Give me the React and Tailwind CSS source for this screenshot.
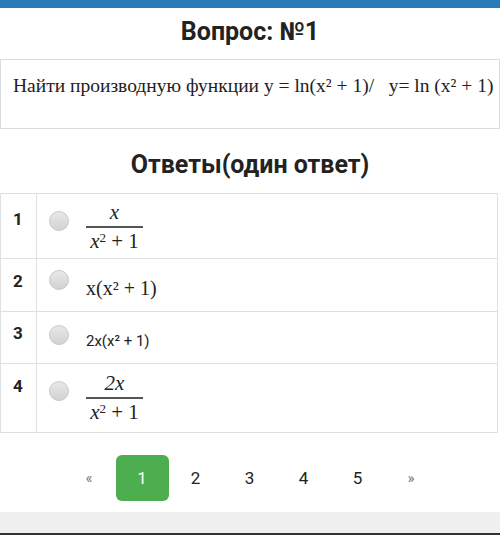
import React from 'react';

const sans = { fontFamily: "Roboto, 'Liberation Sans', sans-serif" };
const serif = { fontFamily: "'Liberation Serif', 'Times New Roman', serif" };

const Radio = () => (
  <span className="block w-[20px] h-[20px] rounded-full border border-[#c8c8c8] bg-gradient-to-b from-[#e8e8e8] to-[#d2d2d2] shrink-0" />
);

const Fraction = ({ top }) => (
  <div className="inline-flex flex-col items-center text-[21px] leading-none text-[#222]" style={serif}>
    <span className="italic pb-[3px]">{top}</span>
    <span className="h-[2px] w-[57px] bg-[#555]" />
    <span className="pt-[3px]">
      <i>x</i>
      <sup className="text-[13px]">2</sup>
      <span> + 1</span>
    </span>
  </div>
);

const rows = [
  { n: 1, h: 'h-[64px]', numPt: 'pt-[15px]', bodyPt: 'pt-[17px]', body: <div className="mt-[-9px]"><Fraction top="x" /></div> },
  { n: 2, h: 'h-[53px]', numPt: 'pt-[12px]', bodyPt: 'pt-[11px]', body: <div className="text-[20px] mt-[3px] text-[#222]" style={serif}>x(x² + 1)</div> },
  { n: 3, h: 'h-[52px]', numPt: 'pt-[11px]', bodyPt: 'pt-[13px]', body: <div className="text-[15px] mt-[5px] text-[#222]" style={sans}>2x(x² + 1)</div> },
  { n: 4, h: 'h-[69px]', numPt: 'pt-[12px]', bodyPt: 'pt-[17px]', body: <div className="mt-[-8px]"><Fraction top="2x" /></div> },
];

export default function App() {
  return (
    <div className="w-[500px] h-[535px] bg-white flex flex-col overflow-hidden" style={sans}>
      <div className="h-[8px] bg-[#2b7bb9]" />

      <h1 className="text-center font-bold text-[25px] text-[#222] mt-[9px] leading-[30px]">Вопрос: №1</h1>

      <div className="mt-[12px] h-[71px] border border-[#dcdcdc] pl-[12px] pt-[11px] overflow-hidden">
        <p className="text-[19.5px] whitespace-nowrap text-[#222]" style={serif}>
          Найти производную функции y = ln(x² + 1)/&nbsp;&nbsp;&nbsp;y= ln (x² + 1)
        </p>
      </div>

      <h2 className="text-center font-bold text-[25px] text-[#222] mt-[21px] leading-[30px]">Ответы(один ответ)</h2>

      <div className="mt-[13px] w-[498px] border border-[#e0e0e0] flex flex-col">
        {rows.map((r, i) => (
          <div key={r.n} className={`flex ${r.h} ${i > 0 ? 'border-t border-[#e0e0e0]' : ''}`}>
            <div className={`w-[36px] border-r border-[#e0e0e0] pl-[12px] ${r.numPt} text-[17px] leading-[20px] font-bold text-[#222]`}>{r.n}</div>
            <div className={`flex items-start gap-[17px] pl-[12px] ${r.bodyPt}`}>
              <Radio />
              {r.body}
            </div>
          </div>
        ))}
      </div>

      <div className="mt-[22px] flex justify-center items-center text-[17px] text-[#222]">
        <span className="w-[53px] h-[46px] flex items-center justify-center text-[#777] text-[15px]">«</span>
        <span className="w-[53px] h-[46px] flex items-center justify-center rounded-[6px] bg-[#4cae4f] text-white">1</span>
        <span className="w-[54px] h-[46px] flex items-center justify-center">2</span>
        <span className="w-[54px] h-[46px] flex items-center justify-center">3</span>
        <span className="w-[54px] h-[46px] flex items-center justify-center">4</span>
        <span className="w-[54px] h-[46px] flex items-center justify-center">5</span>
        <span className="w-[53px] h-[46px] flex items-center justify-center text-[#777] text-[15px]">»</span>
      </div>

      <div className="mt-[11px] h-[21px] bg-[#f0f0f0]" />
      <div className="h-[2px] bg-[#333]" />
    </div>
  );
}
